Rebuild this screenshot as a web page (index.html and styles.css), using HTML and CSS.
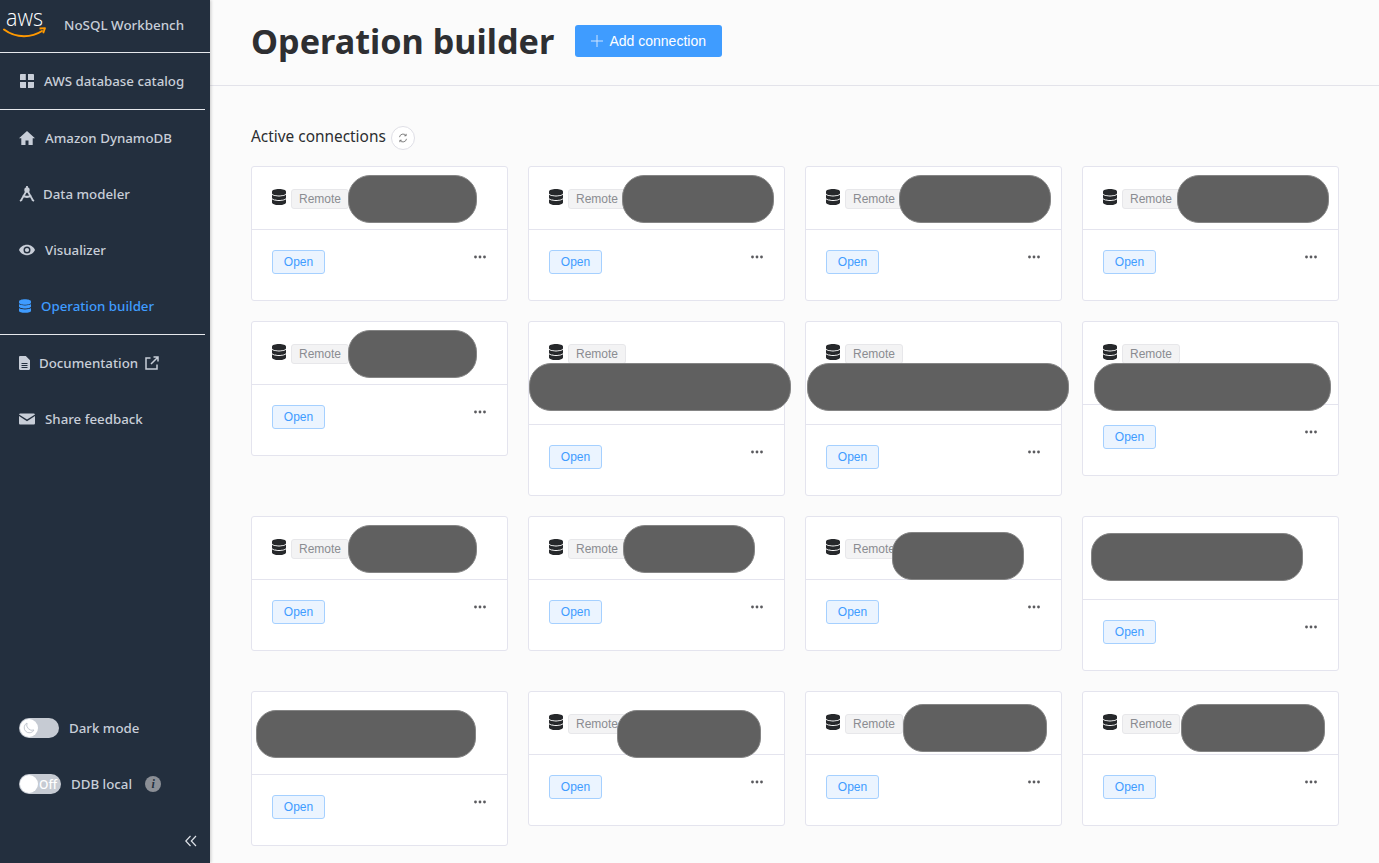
FILE: index.html
```html
<!DOCTYPE html>
<html lang="en">
<head>
<meta charset="utf-8">
<title>Operation builder</title>
<link rel="stylesheet" href="styles.css">
</head>
<body>
<svg class="defs" width="0" height="0" aria-hidden="true">
  <symbol id="db" viewBox="0 0 14 16">
    <path d="M7 0C3.100 0 0 1.100 0 2.600v1.600C0 5.500 3.100 6.500 7 6.500s7-1 7-2.300V2.600C14 1.100 10.900 0 7 0z"/>
    <path d="M0 5.800v2.900C0 10 3.100 11 7 11s7-1 7-2.300V5.800C12.600 7 10 7.500 7 7.500S1.400 7 0 5.800z"/>
    <path d="M0 10.300v3.100C0 14.900 3.100 16 7 16s7-1.100 7-2.600v-3.100C12.600 11.500 10 12 7 12s-5.600-.5-7-1.700z"/>
  </symbol>
  <symbol id="dots" viewBox="0 0 12 4">
    <circle cx="1.500" cy="2" r="1.400"/><circle cx="6" cy="2" r="1.400"/><circle cx="10.500" cy="2" r="1.400"/>
  </symbol>
</svg>
<div class="app">
  <aside class="sidebar">
    <div class="brand">
      <svg class="aws" viewBox="0 0 44 30">
        <text x="3" y="15.500" class="aws-text" textLength="37" lengthAdjust="spacingAndGlyphs">aws</text>
        <path d="M1 19.500c6 4.500 13 6.700 20 6.700 6 0 13-1.900 18-5.200" fill="none" stroke="#ff9900" stroke-width="2" stroke-linecap="round"/>
        <path d="M36.500 18.500l5.500-.4-1.800 5.200" fill="none" stroke="#ff9900" stroke-width="1.800" stroke-linejoin="round"/>
      </svg>
      <span class="brand-name">NoSQL Workbench</span>
    </div>
    <nav class="nav nav-catalog">
      <a class="nav-item">
        <svg class="ico" viewBox="0 0 14 14"><path d="M0 .8C0 .4.400 0 .8 0h5v6H0zM8 0h5.200c.4 0 .8.400.8.800V6H8zM0 8h6v6H.8c-.4 0-.8-.4-.8-.8zM8 8h6v5.200c0 .4-.4.8-.8.800H8z"/></svg>
        <span class="lab-catalog">AWS database catalog</span>
      </a>
    </nav>
    <nav class="nav nav-main">
      <a class="nav-item">
        <svg class="ico ico-w" viewBox="0 0 16 16"><path d="M8 1L0 8.300h2.300V15h4.200v-4.500h3V15h4.200V8.300H16z"/></svg>
        <span class="lab-home">Amazon DynamoDB</span>
      </a>
      <a class="nav-item">
        <svg class="ico" viewBox="0 0 16 16" fill="none" stroke="#c8ced8" stroke-width="1.800"><circle cx="8" cy="4" r="1.800"/><path d="M7 5.800L2 14.500M9 5.800l5 8.700M3.500 9.800c2.800 1.500 6.200 1.500 9 0M1 15l2-1.200M15 15l-2-1.200M8 0v2"/></svg>
        <span class="lab-model">Data modeler</span>
      </a>
      <a class="nav-item">
        <svg class="ico ico-w" viewBox="0 0 16 16"><path fill-rule="evenodd" d="M8 2.800C4.400 2.800 1.300 5 0 8c1.300 3 4.400 5.200 8 5.200s6.700-2.200 8-5.200c-1.300-3-4.400-5.200-8-5.200zm0 1.700a3.500 3.500 0 110 7 3.500 3.500 0 010-7z"/><circle cx="8" cy="8" r="2.100"/></svg>
        <span class="lab-home">Visualizer</span>
      </a>
      <a class="nav-item active">
        <svg class="ico ico-db"><use href="#db"/></svg>
        <span class="lab-op">Operation builder</span>
      </a>
    </nav>
    <nav class="nav nav-links">
      <a class="nav-item">
        <svg class="ico ico-doc" viewBox="0 0 11 14"><path fill-rule="evenodd" d="M1.200 0h5.600L11 4.200v8.600c0 .7-.5 1.200-1.200 1.200H1.200C.5 14 0 13.500 0 12.800V1.200C0 .5.500 0 1.200 0zM2.500 7v1h6V7zm0 2v1h6V9zm0 2v1h6v-1z"/></svg>
        <span class="lab-doc">Documentation</span>
        <svg class="ext" viewBox="0 0 14 14" fill="none" stroke="#c8ced8" stroke-width="1.500"><path d="M5.500 2H1v11h11V8.500M6 8L12.800 1.200M8.500 1h4.500v4.500"/></svg>
      </a>
      <a class="nav-item">
        <svg class="ico ico-w" viewBox="0 0 16 16"><path d="M1.300 2.500h13.400c.6 0 1.100.4 1.300.9L8 8.600 0 3.400c.2-.5.700-.9 1.300-.9zM0 5.100v7.100c0 .7.600 1.300 1.300 1.300h13.400c.7 0 1.300-.6 1.300-1.300V5.100L8 10.300z"/></svg>
        <span class="lab-home">Share feedback</span>
      </a>
    </nav>
    <div class="side-bottom">
      <div class="toggle-row">
        <span class="toggle toggle-dark"><span class="knob"><svg viewBox="0 0 12 12" class="moon"><path d="M4 1a5.500 5.500 0 007 7A5.200 5.200 0 114 1z" fill="none" stroke="#c3c8d0" stroke-width="1"/></svg></span></span>
        <span class="toggle-label">Dark mode</span>
      </div>
      <div class="toggle-row toggle-row-local">
        <span class="toggle toggle-local"><span class="knob"></span><span class="off">Off</span></span>
        <span class="toggle-label">DDB local</span>
        <span class="info">i</span>
      </div>
      <div class="collapse">
        <svg viewBox="0 0 12 12" fill="none" stroke="#dde1e7" stroke-width="1.200"><path d="M5.500 1L.8 6l4.700 5M11 1L6.300 6l4.700 5"/></svg>
      </div>
    </div>
  </aside>
  <main class="main">
    <header class="topbar">
      <h1>Operation builder</h1>
      <button class="add-btn"><svg viewBox="0 0 12 12" fill="none" stroke="#cfe4ff" stroke-width="1"><path d="M6 0v12M0 6h12"/></svg>Add connection</button>
    </header>
    <section class="content">
      <div class="section-title">
        <h2>Active connections</h2>
        <span class="refresh"><svg viewBox="0 0 12 12" fill="none" stroke="#666" stroke-width="1"><path d="M1.800 5A4.300 4.300 0 019.500 3M10.200 7A4.300 4.300 0 012.500 9"/><path d="M9.800 1v2.300H7.500M2.200 11V8.700h2.300"/></svg></span>
      </div>
      <div class="grid">
        <article class="card"><div class="card-head"><svg class="db"><use href="#db"/></svg><span class="tag">Remote</span></div><div class="card-foot"><button class="open">Open</button><svg class="more"><use href="#dots"/></svg></div><i class="blob b1"></i></article>
        <article class="card"><div class="card-head"><svg class="db"><use href="#db"/></svg><span class="tag">Remote</span></div><div class="card-foot"><button class="open">Open</button><svg class="more"><use href="#dots"/></svg></div><i class="blob b2"></i></article>
        <article class="card"><div class="card-head"><svg class="db"><use href="#db"/></svg><span class="tag">Remote</span></div><div class="card-foot"><button class="open">Open</button><svg class="more"><use href="#dots"/></svg></div><i class="blob b3"></i></article>
        <article class="card"><div class="card-head"><svg class="db"><use href="#db"/></svg><span class="tag">Remote</span></div><div class="card-foot"><button class="open">Open</button><svg class="more"><use href="#dots"/></svg></div><i class="blob b4"></i></article>

        <article class="card"><div class="card-head"><svg class="db"><use href="#db"/></svg><span class="tag">Remote</span></div><div class="card-foot"><button class="open">Open</button><svg class="more"><use href="#dots"/></svg></div><i class="blob b1"></i></article>
        <article class="card tall"><div class="card-head"><svg class="db"><use href="#db"/></svg><span class="tag">Remote</span></div><div class="card-foot"><button class="open">Open</button><svg class="more"><use href="#dots"/></svg></div><i class="blob b6"></i></article>
        <article class="card tall"><div class="card-head"><svg class="db"><use href="#db"/></svg><span class="tag">Remote</span></div><div class="card-foot"><button class="open">Open</button><svg class="more"><use href="#dots"/></svg></div><i class="blob b7"></i></article>
        <article class="card mid"><div class="card-head"><svg class="db"><use href="#db"/></svg><span class="tag">Remote</span></div><div class="card-foot"><button class="open">Open</button><svg class="more"><use href="#dots"/></svg></div><i class="blob b8"></i></article>

        <article class="card"><div class="card-head"><svg class="db"><use href="#db"/></svg><span class="tag">Remote</span></div><div class="card-foot"><button class="open">Open</button><svg class="more"><use href="#dots"/></svg></div><i class="blob b1"></i></article>
        <article class="card"><div class="card-head"><svg class="db"><use href="#db"/></svg><span class="tag">Remote</span></div><div class="card-foot"><button class="open">Open</button><svg class="more"><use href="#dots"/></svg></div><i class="blob b10"></i></article>
        <article class="card"><div class="card-head"><svg class="db"><use href="#db"/></svg><span class="tag">Remote</span></div><div class="card-foot"><button class="open">Open</button><svg class="more"><use href="#dots"/></svg></div><i class="blob b11"></i></article>
        <article class="card mid"><div class="card-head"></div><div class="card-foot"><button class="open">Open</button><svg class="more"><use href="#dots"/></svg></div><i class="blob b12"></i></article>

        <article class="card mid"><div class="card-head"></div><div class="card-foot"><button class="open">Open</button><svg class="more"><use href="#dots"/></svg></div><i class="blob b13"></i></article>
        <article class="card"><div class="card-head"><svg class="db"><use href="#db"/></svg><span class="tag">Remote</span></div><div class="card-foot"><button class="open">Open</button><svg class="more"><use href="#dots"/></svg></div><i class="blob b14"></i></article>
        <article class="card"><div class="card-head"><svg class="db"><use href="#db"/></svg><span class="tag">Remote</span></div><div class="card-foot"><button class="open">Open</button><svg class="more"><use href="#dots"/></svg></div><i class="blob b15"></i></article>
        <article class="card"><div class="card-head"><svg class="db"><use href="#db"/></svg><span class="tag">Remote</span></div><div class="card-foot"><button class="open">Open</button><svg class="more"><use href="#dots"/></svg></div><i class="blob b16"></i></article>
      </div>
    </section>
  </main>
</div>
</body>
</html>
```

FILE: styles.css
```css
* { box-sizing: border-box; }
html, body { margin: 0; height: 100%; }
body {
  font-family: "Noto Sans", "Open Sans", sans-serif;
  background: #fbfbfb;
  color: #2b2d30;
  overflow: hidden;
}
.defs { position: absolute; }
.app { display: flex; height: 863px; }

/* Sidebar */
.sidebar {
  width: 210px;
  flex: none;
  background: #232f3e;
  color: #c8ced8;
  display: flex;
  flex-direction: column;
  box-shadow: 1px 0 3px rgba(0,0,0,.2);
  position: relative;
  z-index: 1;
}
.brand {
  height: 53px;
  flex: none;
  display: flex;
  align-items: center;
  padding: 0 0 3px 3px;
  border-bottom: 1px solid #e6e8ec;
}
.aws { width: 44px; height: 30px; flex: none; overflow: visible; }
.aws-text { font: 300 24px "Open Sans", sans-serif; fill: #fff; }
.brand-name { font-size: 13.4px; margin-left: 17px; font-weight: 500; white-space: nowrap; }
.nav { display: flex; flex-direction: column; }
.nav-catalog { height: 57px; border-bottom: 1px solid #e6e8ec; width: 205px; justify-content: center; }
.nav-main { width: 205px; border-bottom: 1px solid #e6e8ec; height: 225px; }
.nav-item {
  display: flex;
  align-items: center;
  height: 56px;
  padding: 0 0 0 19px;
  font-size: 13.3px;
  font-weight: 500;
  white-space: nowrap;
}
.ico { width: 16px; height: 16px; fill: #c8ced8; flex: none; }
.nav-catalog .ico { width: 14px; height: 14px; margin-left: 1px; }
.ico-db { fill: #3f9cff; width: 12px; height: 14px; }
.ico-doc { width: 11px; height: 14px; }
.lab-catalog { margin-left: 10px; }
.lab-home { margin-left: 10px; }
.lab-model { margin-left: 8px; }
.lab-op { margin-left: 10px; }
.lab-doc { margin-left: 9px; }
.active { color: #3f9cff; }
.ext { width: 14px; height: 14px; margin-left: 7px; flex: none; }
.nav-links { width: 205px; }

.side-bottom { margin-top: auto; padding-left: 19px; display: flex; flex-direction: column; }
.toggle-row { display: flex; align-items: center; height: 20px; margin-bottom: 36px; }
.toggle-row-local { margin-bottom: 0; }
.toggle {
  display: flex;
  align-items: center;
  height: 20px;
  border-radius: 10px;
  background: #c6cbd3;
  padding: 1px;
  flex: none;
  overflow: hidden;
}
.toggle-dark { width: 40px; }
.toggle-local { width: 42px; }
.knob { width: 18px; height: 18px; border-radius: 50%; background: #fff; flex: none; display: flex; }
.moon { width: 12px; height: 12px; margin: 3px; }
.off { color: #fff; font-size: 12px; margin-left: 1px; font-weight: 500; }
.toggle-label { font-size: 13.3px; font-weight: 500; margin-left: 10px; white-space: nowrap; }
.info {
  width: 16px; height: 16px;
  margin-left: 13px;
  border-radius: 50%;
  background: #8b8f96;
  color: #232f3e;
  font: italic 700 12px/16px "Liberation Serif", serif;
  text-align: center;
}
.collapse { display: flex; justify-content: flex-end; padding: 41px 13px 16px 0; }
.collapse svg { width: 12px; height: 12px; }

/* Main */
.main { flex: 1; min-width: 0; }
.topbar {
  height: 86px;
  display: flex;
  align-items: flex-start;
  padding: 0 0 0 41px;
  border-bottom: 1px solid #e3e3ea;
}
h1 { font-size: 34.2px; line-height: 44px; font-weight: 700; margin: 19px 21px 0 0; color: #2e2f32; white-space: nowrap; }
.add-btn {
  margin-top: 25px;
  width: 147px;
  height: 32px;
  border: 0;
  border-radius: 3px;
  background: #3f9cff;
  color: #fff;
  font: 14px "Liberation Sans", sans-serif;
  display: flex;
  align-items: center;
  justify-content: center;
  gap: 6px;
  padding: 0;
}
.add-btn svg { width: 12px; height: 12px; }
.content { padding: 39px 40px 0 41px; }
.section-title { display: flex; align-items: flex-start; height: 24px; margin-bottom: 17px; }
h2 { font-size: 15.4px; font-weight: 400; margin: 0; line-height: 24px; color: #2b2d30; white-space: nowrap; }
.refresh {
  width: 24px; height: 24px;
  margin: 1px 0 0 5px;
  border: 1px solid #dfdfe6;
  border-radius: 50%;
  background: #fff;
  display: flex;
  align-items: center;
  justify-content: center;
  flex: none;
}
.refresh svg { width: 10px; height: 10px; }

.grid {
  display: grid;
  grid-template-columns: repeat(4, 257px);
  gap: 20px;
  align-items: start;
}
.card {
  position: relative;
  background: #fff;
  border: 1px solid #e4e4ee;
  border-radius: 3px;
  height: 135px;
  display: flex;
  flex-direction: column;
}
.card.mid { height: 155px; }
.card.tall { height: 175px; }
.card-head {
  height: 63px;
  flex: none;
  border-bottom: 1px solid #e4e4ee;
  display: flex;
  align-items: flex-start;
  padding: 22px 0 0 20px;
}
.mid .card-head { height: 83px; }
.tall .card-head { height: 103px; }
.db { width: 14px; height: 16px; fill: #26282b; flex: none; }
.tag {
  margin-left: 5px;
  width: 58px;
  height: 20px;
  border: 1px solid #e7e7ea;
  border-radius: 3px;
  background: #f3f3f4;
  color: #8a8c91;
  font: 12px/18px "Liberation Sans", sans-serif;
  text-align: center;
}
.card-foot {
  flex: 1;
  display: flex;
  justify-content: space-between;
  align-items: flex-start;
  padding: 20px 21px 0 20px;
}
.open {
  width: 53px;
  height: 24px;
  padding: 0;
  border: 1px solid #a5d0ff;
  border-radius: 3px;
  background: #ebf4ff;
  color: #3f9cff;
  font: 12px "Liberation Sans", sans-serif;
}
.more { width: 12px; height: 4px; margin-top: 5px; fill: #5a5a5e; flex: none; }

/* Redaction blobs sit over the card text */
.blob {
  position: absolute;
  height: 48px;
  border-radius: 22px;
  background: #606060;
  border: 1px solid #858585;
  z-index: 2;
}
.b1 { left: 96px; top: 8px; width: 129px; }
.b2 { left: 93px; top: 8px; width: 152px; }
.b3 { left: 93px; top: 8px; width: 152px; }
.b4 { left: 94px; top: 8px; width: 152px; }
.b6 { left: 0; top: 41px; width: 262px; }
.b7 { left: 1px; top: 41px; width: 262px; }
.b8 { left: 11px; top: 41px; width: 237px; }
.b10 { left: 94px; top: 8px; width: 132px; }
.b11 { left: 86px; top: 15px; width: 132px; border-radius: 20px; }
.b12 { left: 8px; top: 16px; width: 212px; border-radius: 20px; }
.b13 { left: 4px; top: 18px; width: 220px; border-radius: 20px; }
.b14 { left: 88px; top: 18px; width: 144px; border-radius: 20px; }
.b15 { left: 97px; top: 12px; width: 144px; border-radius: 20px; }
.b16 { left: 98px; top: 12px; width: 144px; border-radius: 20px; }
```
